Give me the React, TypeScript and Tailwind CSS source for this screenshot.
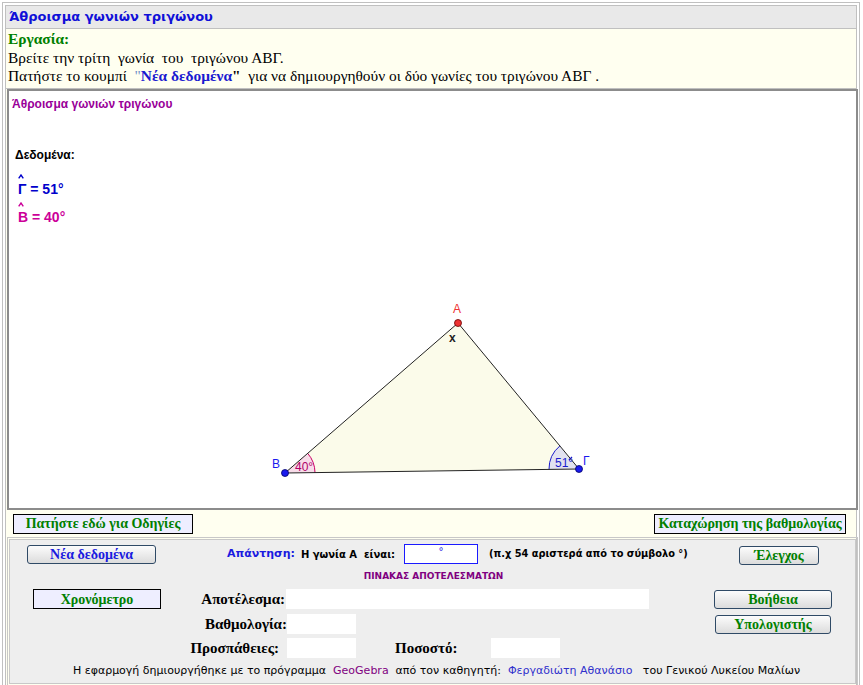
import React from "react";

const serif = "font-['Liberation_Serif','Times_New_Roman',serif]";
const verd = "font-['DejaVu_Sans',Verdana,sans-serif]";
const arial = "font-['Liberation_Sans',Arial,sans-serif]";
const svgFont = "Liberation Sans, Arial, sans-serif";

function GreyBtn({ className, children }: { className: string; children: React.ReactNode }) {
  return (
    <div
      className={`flex h-[19px] items-center justify-center rounded-[3px] border border-[#2f4a66] bg-linear-to-b from-[#fcfcfc] to-[#dcdcdc] text-[14px] font-bold font-['Liberation_Serif','Times_New_Roman',serif] ${className}`}
    >
      {children}
    </div>
  );
}

function LavBtn({ className, children }: { className: string; children: React.ReactNode }) {
  return (
    <div
      className={`flex h-[20px] items-center justify-center border border-black bg-[#eeeeff] text-[14px] font-bold text-[#008000] font-['Liberation_Serif','Times_New_Roman',serif] ${className}`}
    >
      {children}
    </div>
  );
}

function Hat({ color, className }: { color: string; className: string }) {
  return (
    <svg className={className} width="6" height="5" viewBox="0 0 6 5">
      <polyline points="0.7,4.3 3,1 5.3,4.3" fill="none" stroke={color} strokeWidth="1.4" />
    </svg>
  );
}

export default function App() {
  return (
    <div className="h-[685px] w-[863px] overflow-hidden bg-white pl-[2px] pt-[2px]">
      <div className="w-[858px] border border-[#c0c0c0] p-[2px]">
        {/* header */}
        <div className="flex h-[24px] items-center border border-[#c0c0c0] bg-[#e9e9e9] pl-[3px]">
          <span className={`text-[13px] font-bold text-[#1010d8] ${verd}`}>Άθροισμα γωνιών τριγώνου</span>
        </div>
        {/* task */}
        <div
          className={`h-[60px] border-x border-b border-[#c0c0c0] bg-[#fffff0] pl-[2px] pt-[1px] text-[15.4px] leading-[18.5px] text-black ${serif}`}
        >
          <div className="font-bold text-[#008000]">Εργασία:</div>
          <div>Βρείτε την τρίτη&nbsp; γωνία&nbsp; του&nbsp; τριγώνου ΑΒΓ.</div>
          <div>
            Πατήστε το κουμπί&nbsp;&nbsp;<span className="text-[#7090c8]">"</span>
            <span className="font-bold text-[#1a1ad0]">Νέα δεδομένα</span>
            <span className="font-bold">"</span>&nbsp;&nbsp;για να δημιουργηθούν οι δύο γωνίες του τριγώνου ΑΒΓ&nbsp;.
          </div>
        </div>
        {/* body */}
        <div className="h-[600px] border-x border-[#c0c0c0] bg-[#fffff0]">
          {/* applet (GeoGebra canvas) */}
          <div className="relative ml-[1px] h-[421px] w-[851px] border-2 border-[#8c8c8c] bg-white">
            <div className={`absolute left-[3px] top-[4px] text-[12px] font-bold text-[#990099] ${arial}`}>
              Άθροισμα γωνιών τριγώνου
            </div>
            <div className={`absolute left-[6px] top-[55px] text-[12px] font-bold text-black ${arial}`}>Δεδομένα:</div>
            <Hat color="#0000cc" className="absolute left-[9px] top-[83px]" />
            <div className={`absolute left-[9px] top-[91px] text-[14px] font-bold leading-[14px] text-[#0000cc] ${arial}`}>
              Γ = 51°
            </div>
            <Hat color="#cc0099" className="absolute left-[9px] top-[111px]" />
            <div className={`absolute left-[9px] top-[119px] text-[14px] font-bold leading-[14px] text-[#cc0099] ${arial}`}>
              B = 40°
            </div>
            <svg className="absolute left-0 top-0" width="847" height="417" viewBox="0 0 847 417">
              <polygon points="276,382 449,232 570,378" fill="#fbfbea" stroke="none" />
              <path d="M276 382 L306 381.6 A30 30 0 0 0 298.7 362.35 Z" fill="#f8dce9" stroke="none" />
              <path d="M306 381.6 A30 30 0 0 0 298.7 362.35" fill="none" stroke="#cc0066" strokeWidth="1" />
              <path d="M570 378 L540 378.4 A30 30 0 0 1 550.9 354.9 Z" fill="#e2e2f0" stroke="none" />
              <path d="M540 378.4 A30 30 0 0 1 550.9 354.9" fill="none" stroke="#1a1acc" strokeWidth="1" />
              <line x1="560" y1="369" x2="563" y2="366" stroke="#1a1acc" strokeWidth="1.2" />
              <polygon points="276,382 449,232 570,378" fill="none" stroke="#222" strokeWidth="1" />
              <circle cx="276" cy="382" r="3.5" fill="#1a1aee" stroke="#000066" strokeWidth="0.8" />
              <circle cx="449" cy="232" r="3.5" fill="#ee3333" stroke="#660000" strokeWidth="0.8" />
              <circle cx="570" cy="378" r="3.5" fill="#1a1aee" stroke="#000066" strokeWidth="0.8" />
              <text x="444" y="222" fontSize="12" fill="#ee3333" fontFamily={svgFont}>A</text>
              <text x="440" y="251" fontSize="12" fontWeight="bold" fill="#222" fontFamily={svgFont}>x</text>
              <text x="263" y="377" fontSize="12" fill="#1a1aee" fontFamily={svgFont}>B</text>
              <text x="574" y="374" fontSize="12" fill="#1a1aee" fontFamily={svgFont}>Γ</text>
              <text x="286" y="380" fontSize="12" fill="#b0006a" fontFamily={svgFont}>40°</text>
              <text x="546" y="376" fontSize="12" fill="#1a1acc" fontFamily={svgFont}>51°</text>
            </svg>
          </div>
          {/* instruction buttons row */}
          <div className="flex h-[27px] items-center justify-between pl-[7px] pr-[10px]">
            <LavBtn className="w-[180px]">Πατήστε εδώ για Οδηγίες</LavBtn>
            <LavBtn className="w-[192px]">Καταχώρηση της βαθμολογίας</LavBtn>
          </div>
          {/* grey form */}
          <div className="ml-[1px] w-[851px] border border-[#c8c8c8] p-[1px]">
            <div className="h-[145px] border border-[#c8c8c8] bg-[#eeeeee]">
              {/* row 1 */}
              <div className="mt-[4px] flex h-[20px] items-center">
                <div className="ml-[17px]">
                  <GreyBtn className="w-[129px] text-[#1a1ae0]">Νέα δεδομένα</GreyBtn>
                </div>
                <div className={`ml-[71px] flex w-[177px] items-center text-[11px] font-bold ${verd}`}>
                  <span className="text-[#1a1ae0]">Απάντηση:</span>
                  <span className="ml-[6px] text-[10px] text-black">Η γωνία Α&nbsp; είναι:</span>
                </div>
                <div
                  className={`flex h-[20px] w-[74px] items-start justify-center border border-[#1a1aff] bg-white text-[10px] leading-[14px] text-[#1a1ae0] ${verd}`}
                >
                  °
                </div>
                <div className={`ml-[11px] w-[250px] text-[9.8px] font-bold text-black ${verd}`}>
                  (π.χ 54 αριστερά από το σύμβολο °)
                </div>
                <div className="mt-[3px]">
                  <GreyBtn className="w-[80px] text-[#008000]">Έλεγχος</GreyBtn>
                </div>
              </div>
              {/* row 2 */}
              <div className={`mt-[6px] flex h-[14px] items-center justify-center pl-[2px] text-[9px] font-bold text-[#800080] ${verd}`}>
                ΠΙΝΑΚΑΣ ΑΠΟΤΕΛΕΣΜΑΤΩΝ
              </div>
              {/* row 3 */}
              <div className="mt-[5px] flex h-[20px] items-center">
                <LavBtn className="ml-[23px] w-[128px]">Χρονόμετρο</LavBtn>
                <div className={`w-[125px] pr-[1px] text-right text-[15px] font-bold text-black ${serif}`}>Αποτέλεσμα:</div>
                <div className="h-[20px] w-[363px] bg-white" />
                <div className="ml-[65px]">
                  <GreyBtn className="w-[118px] text-[#008000]">Βοήθεια</GreyBtn>
                </div>
              </div>
              {/* row 4 */}
              <div className="mt-[5px] flex h-[20px] items-center">
                <div className={`w-[277px] text-right text-[15px] font-bold text-black ${serif}`}>Βαθμολογία:</div>
                <div className="h-[20px] w-[69px] bg-white" />
                <div className="ml-[359px]">
                  <GreyBtn className="w-[116px] text-[#008000]">Υπολογιστής</GreyBtn>
                </div>
              </div>
              {/* row 5 */}
              <div className="mt-[4px] flex h-[20px] items-center">
                <div className={`w-[277px] pr-[8px] text-right text-[15px] font-bold text-black ${serif}`}>Προσπάθειες:</div>
                <div className="h-[20px] w-[69px] bg-white" />
                <div className={`ml-[39px] w-[96px] text-[15px] font-bold text-black ${serif}`}>Ποσοστό:</div>
                <div className="h-[20px] w-[69px] bg-white" />
              </div>
              {/* footer */}
              <div className={`mt-[6px] flex h-[14px] items-center justify-center pl-[8px] text-[11px] text-black ${verd}`}>
                <span>Η εφαρμογή δημιουργήθηκε με το πρόγραμμα&nbsp;&nbsp;</span>
                <span className="text-[#800080]">GeoGebra</span>
                <span>&nbsp;&nbsp;από τον καθηγητή:&nbsp;&nbsp;</span>
                <span className="text-[#3030cc]">Φεργαδιώτη Αθανάσιο</span>
                <span>&nbsp;&nbsp;&nbsp;του Γενικού Λυκείου Μαλίων</span>
              </div>
            </div>
          </div>
        </div>
      </div>
    </div>
  );
}
